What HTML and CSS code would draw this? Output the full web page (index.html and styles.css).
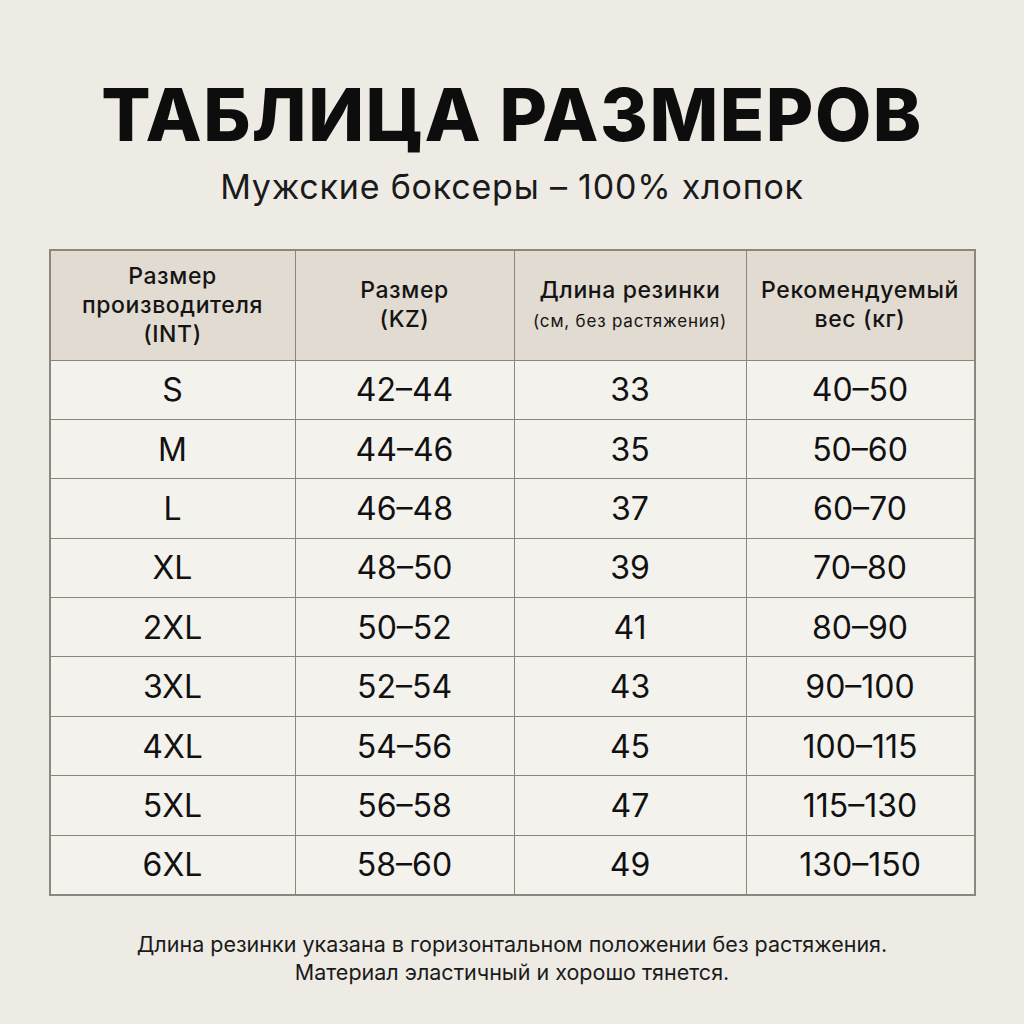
FILE: index.html
```html
<!DOCTYPE html>
<html lang="ru">
<head>
<meta charset="utf-8">
<link rel="stylesheet" href="styles.css">
</head>
<body>
<div class="page">
  <h1 class="title">ТАБЛИЦА РАЗМЕРОВ</h1>
  <p class="subtitle">Мужские боксеры – 100% хлопок</p>
  <table class="sizes">
    <thead>
      <tr>
        <th>Размер<br>производителя<br>(INT)</th>
        <th>Размер<br>(KZ)</th>
        <th>Длина резинки<br><span class="small">(см, без растяжения)</span></th>
        <th>Рекомендуемый<br>вес (кг)</th>
      </tr>
    </thead>
    <tbody>
      <tr><td>S</td><td>42–44</td><td>33</td><td>40–50</td></tr>
      <tr><td>M</td><td>44–46</td><td>35</td><td>50–60</td></tr>
      <tr><td>L</td><td>46–48</td><td>37</td><td>60–70</td></tr>
      <tr><td>XL</td><td>48–50</td><td>39</td><td>70–80</td></tr>
      <tr><td>2XL</td><td>50–52</td><td>41</td><td>80–90</td></tr>
      <tr><td>3XL</td><td>52–54</td><td>43</td><td>90–100</td></tr>
      <tr><td>4XL</td><td>54–56</td><td>45</td><td>100–115</td></tr>
      <tr><td>5XL</td><td>56–58</td><td>47</td><td>115–130</td></tr>
      <tr><td>6XL</td><td>58–60</td><td>49</td><td>130–150</td></tr>
    </tbody>
  </table>
  <p class="note">Длина резинки указана в горизонтальном положении без растяжения.<br>Материал эластичный и хорошо тянется.</p>
</div>
</body>
</html>
```
FILE: styles.css
```css
html, body {
  margin: 0;
  padding: 0;
  background: #eeebe5;
}
.page {
  width: 1024px;
  height: 1024px;
  box-sizing: border-box;
  padding-top: 74px;
  font-family: "Inter", "Noto Sans", sans-serif;
  color: #111;
  display: flex;
  flex-direction: column;
  align-items: center;
}
.title {
  margin: 0;
  font-size: 73px;
  font-weight: 800;
  letter-spacing: 1.5px;
  line-height: 82px;
  color: #0d0d0d;
}
.subtitle {
  margin: 12px 0 0;
  font-size: 34px;
  line-height: 38px;
  font-weight: 400;
  letter-spacing: 0.8px;
  color: #1a1a1a;
}
.sizes {
  margin-top: 43px;
  width: 927px;
  border-collapse: collapse;
  table-layout: fixed;
  border: 2px solid #8e867c;
}
.sizes th, .sizes td {
  border: 1.5px solid #8e867c;
  text-align: center;
  vertical-align: middle;
  padding: 0;
}
.sizes th:nth-child(1) { width: 244px; }
.sizes th:nth-child(2) { width: 218px; }
.sizes th:nth-child(3) { width: 231px; }
.sizes thead tr {
  height: 110px;
  background: #e2dbd1;
}
.sizes th {
  font-size: 23px;
  font-weight: 500;
  line-height: 29px;
  letter-spacing: 0.6px;
  color: #141414;
}
.sizes th .small {
  font-size: 17px;
  font-weight: 400;
  line-height: 24px;
  letter-spacing: 0.8px;
}
.sizes tbody tr {
  height: 59.4px;
  background: #f4f2ed;
}
.sizes td {
  font-size: 32px;
  font-weight: 400;
  color: #111;
}
.note {
  margin: 34px 0 0;
  text-align: center;
  font-size: 21.5px;
  line-height: 28px;
  color: #1a1a1a;
  letter-spacing: 0;
}
```
